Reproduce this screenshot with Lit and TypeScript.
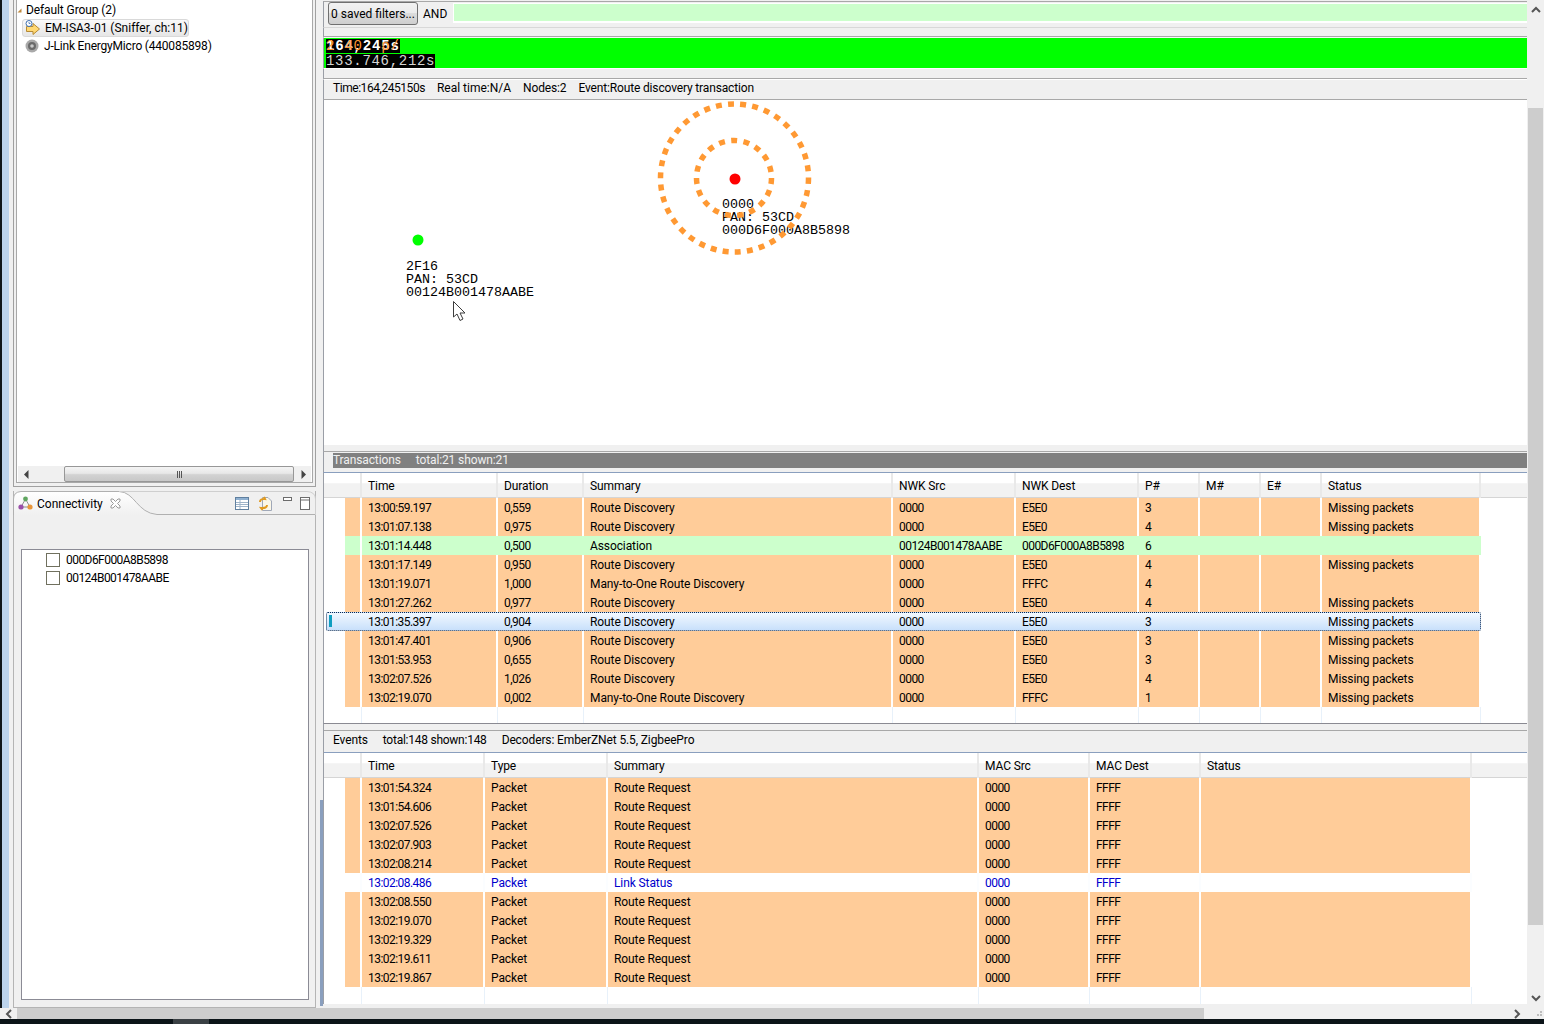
import { LitElement, html, css, svg } from 'lit';
import { customElement, property } from 'lit/decorators.js';

type Tone = 'orange' | 'green' | 'selected' | 'plain';
interface Row {
  tone: Tone;
  cells: string[];
}

const orange = (...cells: string[]): Row => ({ tone: 'orange', cells });

const txColumns = [136, 86, 309, 123, 123, 61, 61, 61, 159];
const txHeads = ['Time', 'Duration', 'Summary', 'NWK Src', 'NWK Dest', 'P#', 'M#', 'E#', 'Status'];
const RD = 'Route Discovery';
const MP = 'Missing packets';
const txRows: Row[] = [
  orange('13:00:59.197', '0,559', RD, '0000', 'E5E0', '3', '', '', MP),
  orange('13:01:07.138', '0,975', RD, '0000', 'E5E0', '4', '', '', MP),
  { tone: 'green', cells: ['13:01:14.448', '0,500', 'Association', '00124B001478AABE', '000D6F000A8B5898', '6', '', '', ''] },
  orange('13:01:17.149', '0,950', RD, '0000', 'E5E0', '4', '', '', MP),
  orange('13:01:19.071', '1,000', 'Many-to-One Route Discovery', '0000', 'FFFC', '4', '', '', ''),
  orange('13:01:27.262', '0,977', RD, '0000', 'E5E0', '4', '', '', MP),
  { tone: 'selected', cells: ['13:01:35.397', '0,904', RD, '0000', 'E5E0', '3', '', '', MP] },
  orange('13:01:47.401', '0,906', RD, '0000', 'E5E0', '3', '', '', MP),
  orange('13:01:53.953', '0,655', RD, '0000', 'E5E0', '3', '', '', MP),
  orange('13:02:07.526', '1,026', RD, '0000', 'E5E0', '4', '', '', MP),
  orange('13:02:19.070', '0,002', 'Many-to-One Route Discovery', '0000', 'FFFC', '1', '', '', MP),
];

const evColumns = [123, 123, 371, 111, 111, 271];
const evHeads = ['Time', 'Type', 'Summary', 'MAC Src', 'MAC Dest', 'Status'];
const rr = (time: string) => orange(time, 'Packet', 'Route Request', '0000', 'FFFF', '');
const evRows: Row[] = [
  rr('13:01:54.324'),
  rr('13:01:54.606'),
  rr('13:02:07.526'),
  rr('13:02:07.903'),
  rr('13:02:08.214'),
  { tone: 'plain', cells: ['13:02:08.486', 'Packet', 'Link Status', '0000', 'FFFF', ''] },
  rr('13:02:08.550'),
  rr('13:02:19.070'),
  rr('13:02:19.329'),
  rr('13:02:19.611'),
  rr('13:02:19.867'),
];

// hex ids and times sit tighter than Roboto's digits
const isNumeric = (text: string) => /^[0-9A-F:.,]+$/.test(text);

@customElement('data-table')
class DataTable extends LitElement {
  @property({ type: Array }) columns: number[] = [];
  @property({ type: Array }) heads: string[] = [];
  @property({ type: Array }) rows: Row[] = [];
  @property({ type: Number }) filler = 16;

  static styles = css`
    :host {
      display: block;
      background: #fff;
      font: 12px Roboto, sans-serif;
      color: #000;
    }
    .head {
      display: grid;
      height: 24px;
      border-bottom: 1px solid #d5d5d5;
      background: linear-gradient(#fff 0, #fff 40%, #f2f2f2 45%, #f2f2f2 100%);
    }
    .head div {
      line-height: 27px;
      padding-left: 6px;
      border-right: 2px solid #e9e9e9;
      box-sizing: border-box;
      white-space: nowrap;
      letter-spacing: -0.1px;
    }
    .head div:last-child {
      border-right: 0;
    }
    .row {
      display: grid;
      height: 19px;
      width: max-content;
      position: relative;
    }
    .cell {
      line-height: 21px;
      padding-left: 6px;
      box-sizing: border-box;
      border-right: 2px solid #fff;
      white-space: nowrap;
      overflow: hidden;
      position: relative;
      letter-spacing: -0.1px;
    }
    .cell.num {
      letter-spacing: -0.55px;
    }
    .lead {
      border: 0;
      padding: 0;
    }
    .orange .cell {
      background: #ffcc99;
    }
    .green .cell {
      background: #ccffcc;
      border-right-color: transparent;
    }
    .green .mark {
      border-right-color: #fff;
    }
    .orange .lead,
    .green .lead {
      background: none;
    }
    .plain .cell {
      color: #0000cc;
      border-right-color: #fbfdff;
    }
    .selected .cell {
      border-right-color: transparent;
    }
    .selected::before {
      content: '';
      position: absolute;
      left: 2px;
      right: 0;
      top: 0;
      bottom: 0;
      border: 1px dotted #0a2a55;
      border-radius: 2px;
      background: linear-gradient(#f2f8ff, #c8e0fb);
    }
    .selected::after {
      content: '';
      position: absolute;
      left: 5px;
      top: 3px;
      width: 3px;
      height: 12px;
      background: #0f9ec0;
    }
    .filler {
      display: grid;
      width: max-content;
    }
    .filler div {
      box-sizing: border-box;
      border-right: 1px solid #e8f1fa;
    }
    .filler .lead {
      border: 0;
    }
  `;

  render() {
    const tracks = [21, 17, ...this.columns].map((w) => `${w}px`).join(' ');
    return html`
      <div class="head" style="grid-template-columns:38px ${this.columns.map((w) => `${w}px`).join(' ')} 1fr">
        <div></div>
        ${this.heads.map((h) => html`<div>${h}</div>`)}
        <div></div>
      </div>
      ${this.rows.map(
        (row) => html`
          <div class="row ${row.tone}" style="grid-template-columns:${tracks}">
            <div class="cell lead"></div>
            <div class="cell mark"></div>
            ${row.cells.map((c) => html`<div class="cell ${isNumeric(c) ? 'num' : ''}">${c}</div>`)}
          </div>
        `,
      )}
      <div class="filler" style="grid-template-columns:${tracks};height:${this.filler}px">
        <div class="lead"></div>
        <div></div>
        ${this.columns.map(() => html`<div></div>`)}
      </div>
    `;
  }
}

const nodes = [
  { x: 94, y: 140, fill: '#00ff00', lines: ['2F16', 'PAN: 53CD', '00124B001478AABE'], lx: 82, ly: 160 },
  { x: 410.5, y: 78.5, fill: '#ff0000', lines: ['0000', 'PAN: 53CD', '000D6F000A8B5898'], lx: 398, ly: 98 },
];

@customElement('app-root')
export class AppRoot extends LitElement {
  static styles = css`
    :host {
      display: flex;
      flex-direction: column;
      width: 1544px;
      height: 1024px;
      overflow: hidden;
      background: #f0f0f0;
      font: 12px Roboto, sans-serif;
      color: #000;
    }
    svg {
      display: block;
      flex: none;
    }
    .main {
      display: flex;
      height: 1008px;
      flex: none;
    }
    .edge {
      width: 7px;
      border-left: 2px solid #10161a;
      background: #bcd3ec;
      flex: none;
    }
    .left {
      width: 303px;
      margin-left: 4px;
      display: flex;
      flex-direction: column;
      flex: none;
    }
    .tree-frame {
      height: 487px;
      box-sizing: border-box;
      border: 1px solid #a0a0a0;
      border-top: 0;
      padding: 0 2px 3px;
      display: flex;
    }
    .tree-inner {
      flex: 1;
      border: 1px solid #a8a8a8;
      border-top: 0;
      background: #fff;
      display: flex;
      flex-direction: column;
    }
    .tree {
      flex: 1;
      padding-top: 1px;
    }
    .tree-row {
      height: 18px;
      line-height: 18px;
      display: flex;
      align-items: center;
      white-space: nowrap;
    }
    .tree-row.group {
      padding-left: 0;
      gap: 4px;
      letter-spacing: -0.1px;
    }
    .tree-row.sel {
      margin-left: 5px;
      width: 167px;
      padding-left: 2px;
      gap: 4px;
      box-sizing: border-box;
      border: 1px solid #d9d9d9;
      border-radius: 3px;
      background: linear-gradient(#fafafa, #e6e6e6);
    }
    .tree-row.dev {
      padding-left: 8px;
      gap: 5px;
      letter-spacing: -0.2px;
    }
    .hbar {
      height: 16px;
      display: flex;
      align-items: center;
      background: #f0f0f0;
      margin: 0 1px;
    }
    .hbar .arr {
      width: 16px;
      display: flex;
      justify-content: center;
      flex: none;
    }
    .hbar .track {
      flex: 1;
      padding-left: 30px;
      height: 16px;
    }
    .hthumb {
      height: 14px;
      width: 228px;
      border: 1px solid #979797;
      border-radius: 2px;
      background: linear-gradient(#f4f4f4, #e8e8e8 45%, #d2d2d2 55%, #c8c8c8);
      display: flex;
      justify-content: center;
      align-items: center;
      gap: 1px;
    }
    .hthumb i {
      width: 1px;
      height: 7px;
      background: #555;
    }
    .conn {
      margin-top: 4px;
      flex: 1;
      margin-bottom: 0;
      box-sizing: border-box;
      border: 1px solid #b4b4b4;
      border-top: 0;
      display: flex;
      flex-direction: column;
      position: relative;
    }
    .conn-head {
      height: 24px;
      flex: none;
      display: flex;
      align-items: center;
      position: relative;
      padding-left: 4px;
    }
    .tab-shape {
      position: absolute;
      left: -1px;
      top: 0;
    }
    .conn-head > *:not(.tab-shape) {
      position: relative;
    }
    .conn-title {
      margin-left: 4px;
      margin-right: 7px;
      padding-top: 2px;
    }
    .conn-tools {
      margin-left: auto;
      margin-right: 5px;
      display: flex;
      gap: 9px;
      align-items: center;
    }
    .tool-min {
      margin-left: 2px;
    }
    .tool-max {
      margin-left: -1px;
    }
    .listbox {
      margin: 34px 6px 7px 7px;
      flex: 1;
      border: 1px solid #8b8b95;
      background: #fff;
      padding-top: 1px;
    }
    .list-row {
      height: 18px;
      display: flex;
      align-items: center;
      padding-left: 24px;
      gap: 6px;
      letter-spacing: -0.55px;
    }
    .check {
      width: 12px;
      height: 12px;
      border: 1px solid #70705e;
      background: #fff;
    }
    .sash {
      width: 4px;
      flex: none;
    }
    .right {
      width: 1208px;
      flex: none;
      box-sizing: border-box;
      padding-left: 3px;
      padding-right: 1px;
      height: 1008px;
      background: linear-gradient(#f0f0f0 0, #f0f0f0 800px, #8a9fbe 800px, #8a9fbe 1006px, #f0f0f0 1006px) no-repeat
        0 0 / 3px 100%;
      display: flex;
      flex-direction: column;
    }
    .right > * {
      flex: none;
      border-left: 1px solid #9a9ea6;
      background: #f0f0f0;
    }
    .right > data-table {
      background: #fff;
    }
    .filters {
      height: 27px;
      box-sizing: border-box;
      margin-top: 1px;
      border-top: 1px solid #a8a8a8;
      border-bottom: 1px solid #d8d8d8;
      display: flex;
      align-items: flex-start;
      padding-left: 4px;
    }
    .saved {
      width: 90px;
      height: 23px;
      box-sizing: border-box;
      border: 1px solid #707070;
      border-radius: 3px;
      background: linear-gradient(#f2f2f2, #ebebeb 50%, #dcdcdc 50%, #cfcfcf);
      text-align: center;
      line-height: 22px;
    }
    .and {
      margin-left: 5px;
      width: 30px;
      line-height: 24px;
    }
    .filter-input {
      flex: 1;
      height: 17px;
      margin-top: 1px;
      border: 1px solid #fff;
      border-width: 1px 0 2px 1px;
      background: #ccffcc;
    }
    .gap-line {
      height: 8px;
      border-bottom: 1px solid #a8a8a8;
    }
    .timeline {
      border-top: 1px solid #f8f8f8;
      border-bottom: 1px solid #fff;
      background: #00ff00;
      height: 30px;
      padding-left: 2px;
      display: flex;
      flex-direction: column;
      align-items: flex-start;
      font: 14px/14px 'Liberation Mono', monospace;
      letter-spacing: 0.7px;
      gap: 1px;
    }
    .timeline > div {
      background: #000;
      height: 14px;
      margin-top: 1px;
      display: grid;
      white-space: pre;
    }
    .timeline > div + div {
      margin-top: 0;
      color: #d6d6d6;
    }
    .now span {
      grid-area: 1 / 1;
      color: #fff;
      font-weight: bold;
      letter-spacing: 0.8px;
    }
    .now span + span {
      color: #ff9933;
      font-weight: normal;
    }
    .gap-two {
      height: 9px;
      border-bottom: 1px solid #a8a8a8;
    }
    .stats {
      height: 19px;
      border-top: 1px solid #fff;
      border-bottom: 1px solid #a8a8a8;
      display: flex;
      padding-left: 9px;
      line-height: 16px;
      white-space: pre;
    }
    .stats span {
      margin-right: 12px;
    }
    .stats .t {
      letter-spacing: -0.45px;
    }
    .stats .n {
      letter-spacing: -0.15px;
    }
    .canvas {
      height: 345px;
      background: #fff;
      position: relative;
      overflow: hidden;
    }
    .rings {
      position: absolute;
      left: 0;
      top: 0;
    }
    .dot {
      position: absolute;
      width: 11px;
      height: 11px;
      border-radius: 50%;
      transform: translate(-5.5px, -5.5px);
    }
    .label {
      position: absolute;
      font: 13.33px/13px 'Liberation Mono', monospace;
      white-space: pre;
    }
    .cursor {
      position: absolute;
      left: 128px;
      top: 200px;
    }
    .sash-h {
      height: 6px;
      border-bottom: 1px solid #a8a8a8;
    }
    .band {
      height: 21px;
      padding-left: 9px;
      padding-top: 1px;
      box-sizing: border-box;
      border-bottom: 1px solid #8a9fbe;
    }
    .band div {
      height: 15px;
      background: #808080;
      color: #f0f0f0;
      line-height: 14px;
      display: flex;
      gap: 15px;
      letter-spacing: -0.12px;
    }
    .band-ev {
      height: 29px;
      border-top: 1px solid #8a8a92;
      display: flex;
      flex-direction: column;
    }
    .band-ev .s {
      height: 6px;
      border-bottom: 1px solid #a8a8a8;
    }
    .band-ev .t {
      flex: 1;
      padding-left: 9px;
      line-height: 19px;
      display: flex;
      gap: 15px;
      letter-spacing: -0.12px;
      border-bottom: 1px solid #8a9fbe;
    }
    .band-ev .total {
      letter-spacing: -0.25px;
    }
    .vbar {
      width: 16px;
      flex: none;
      position: relative;
      display: flex;
      flex-direction: column;
      align-items: center;
    }
    .vbar .up {
      margin-top: 6px;
    }
    .vbar .thumb {
      margin-top: 95px;
      height: 817px;
      width: 15px;
      margin-right: 1px;
      background: #cdcdcd;
    }
    .vbar .down {
      margin-top: 70px;
    }
    .bottom {
      height: 11px;
      flex: none;
      display: flex;
      align-items: center;
      background: #f0f0f0;
    }
    .bottom .thumb {
      margin-left: 5px;
      width: 1187px;
      height: 11px;
      background: #cdcdcd;
    }
    .bottom .l {
      margin-left: 5px;
    }
    .bottom .r {
      margin-left: 310px;
    }
    .grip {
      margin-left: 15px;
    }
    .task {
      height: 5px;
      flex: none;
      background: #0b1418;
      padding-left: 173px;
    }
    .task div {
      width: 36px;
      height: 5px;
      background: #3a4044;
    }
  `;

  private chevron(up: boolean) {
    return html`<svg width="10" height="7" viewBox="0 0 10 7">
      <path d=${up ? 'M1 6 L5 2 L9 6' : 'M1 1 L5 5 L9 1'} fill="none" stroke="#555" stroke-width="2" />
    </svg>`;
  }

  private chevronSide(left: boolean) {
    return html`<svg width="7" height="10" viewBox="0 0 7 10">
      <path d=${left ? 'M6 1 L2 5 L6 9' : 'M1 1 L5 5 L1 9'} fill="none" stroke="#555" stroke-width="2" />
    </svg>`;
  }

  private leftTree() {
    return html`
      <div class="tree">
        <div class="tree-row group">
          <svg width="5" height="5" viewBox="0 0 5 5"><path d="M0.5 4.5 L4.5 0.5 V4.5 Z" fill="#c08a3e" /></svg>
          <span>Default Group (2)</span>
        </div>
        <div class="tree-row sel">
          <svg width="16" height="16" viewBox="0 0 16 16">
            <path d="M1.5 6.5 H8 V3.5 L14.5 9 L8 14.5 V11.5 H1.5 Z" fill="#ffd873" stroke="#b58a36" />
            <circle cx="4" cy="3.5" r="3" fill="#fff" stroke="#3c6fb0" />
            <path d="M4 2 V3.5 H5.5" fill="none" stroke="#3c6fb0" stroke-width="0.8" />
          </svg>
          <span>EM-ISA3-01 (Sniffer, ch:11)</span>
        </div>
        <div class="tree-row dev">
          <svg width="14" height="14" viewBox="0 0 14 14">
            <circle cx="7" cy="7" r="6.5" fill="#a9a9a9" />
            <circle cx="7" cy="7" r="4" fill="#6a6a6a" />
            <circle cx="7" cy="7" r="1.8" fill="#c9c9c9" />
          </svg>
          <span>J-Link EnergyMicro (440085898)</span>
        </div>
      </div>
      <div class="hbar">
        <div class="arr">
          <svg width="5" height="9" viewBox="0 0 5 9"><path d="M4.5 0 V9 L0 4.5 Z" fill="#444" /></svg>
        </div>
        <div class="track">
          <div class="hthumb"><i></i><i></i><i></i></div>
        </div>
        <div class="arr">
          <svg width="5" height="9" viewBox="0 0 5 9"><path d="M0.5 0 V9 L5 4.5 Z" fill="#444" /></svg>
        </div>
      </div>
    `;
  }

  private connectivity() {
    return html`
      <div class="conn">
        <div class="conn-head">
          <svg class="tab-shape" width="303" height="24" viewBox="0 0 303 24">
            <defs>
              <linearGradient id="tabfill" x1="0" y1="0" x2="0" y2="1">
                <stop offset="0" stop-color="#ffffff" />
                <stop offset="1" stop-color="#f0f0f0" />
              </linearGradient>
            </defs>
            <path d="M0.5 24 V8 Q0.5 1 8 0.5 H106 C122 1 124 22 144 23 H303 V24 Z" fill="url(#tabfill)" />
            <path d="M0.5 24 V8 Q0.5 1 8 0.5 H106 C122 1 124 22 144 23.5 H303" fill="none" stroke="#b0b0b0" />
            <path d="M106 0.5 H294 Q302.5 1 302.5 8 V24" fill="none" stroke="#cfcfcf" />
          </svg>
          <svg width="15" height="15" viewBox="0 0 15 15">
            <path d="M7.5 3 L3 11 H12 Z" fill="none" stroke="#8c8c8c" />
            <circle cx="7.5" cy="3" r="2.4" fill="#5fa55f" />
            <circle cx="3" cy="11" r="2.6" fill="#9a4fa8" />
            <circle cx="12" cy="11" r="2.6" fill="#e8963a" />
          </svg>
          <span class="conn-title">Connectivity</span>
          <svg width="11" height="11" viewBox="0 0 11 11">
            <path d="M1 1 L3 1 L5.5 3.5 L8 1 L10 1 L10 3 L7.5 5.5 L10 8 L10 10 L8 10 L5.5 7.5 L3 10 L1 10 L1 8 L3.5 5.5 L1 3 Z" fill="#fff" stroke="#9a9a9a" />
          </svg>
          <div class="conn-tools">
            <svg width="14" height="13" viewBox="0 0 14 13">
              <rect x="0.5" y="0.5" width="13" height="12" fill="#fff" stroke="#5f7f9f" />
              <rect x="1" y="1" width="12" height="2" fill="#8fb0d0" />
              <path d="M1 5.5 H13 M1 7.5 H13 M1 9.5 H13 M5 3 V12" stroke="#9fb4c9" />
            </svg>
            <svg width="14" height="15" viewBox="0 0 14 15">
              <path d="M4.5 1.5 H10 L13.5 5 V14.5 H4.5 Z" fill="#fbf7e8" stroke="#a0a8b8" />
              <path d="M2 6 Q2 2.5 7 3 L6 1 M9 9 Q9 12.5 3 12 L4.5 14" fill="none" stroke="#e09a20" stroke-width="2" />
            </svg>
            <svg class="tool-min" width="9" height="13" viewBox="0 0 9 13">
              <rect x="0.5" y="0.5" width="8" height="3" fill="#fff" stroke="#6c6c6c" />
            </svg>
            <svg class="tool-max" width="10" height="13" viewBox="0 0 10 13">
              <rect x="0.5" y="0.5" width="9" height="12" fill="#fff" stroke="#6c6c6c" />
              <path d="M0.5 3 H9.5" stroke="#6c6c6c" />
            </svg>
          </div>
        </div>
        <div class="listbox">
          <div class="list-row"><div class="check"></div><span>000D6F000A8B5898</span></div>
          <div class="list-row"><div class="check"></div><span>00124B001478AABE</span></div>
        </div>
      </div>
    `;
  }

  private rings() {
    return svg`
      <circle cx="410.5" cy="78" r="74" fill="none" stroke="#ff9933" stroke-width="5.5" stroke-dasharray="6 6.2" />
      <circle cx="410" cy="78" r="37.5" fill="none" stroke="#ff9933" stroke-width="5.5" stroke-dasharray="6 6.4" />
    `;
  }

  render() {
    return html`
      <div class="main">
        <div class="edge"></div>
        <div class="left">
          <div class="tree-frame"><div class="tree-inner">${this.leftTree()}</div></div>
          ${this.connectivity()}
        </div>
        <div class="sash"></div>
        <div class="right">
          <div class="filters">
            <div class="saved">0 saved filters...</div>
            <div class="and">AND</div>
            <div class="filter-input"></div>
          </div>
          <div class="gap-line"></div>
          <div class="timeline">
            <div class="now"><span>164,245s</span><span>2 40  p/</span></div>
            <div>133.746,212s</div>
          </div>
          <div class="gap-two"></div>
          <div class="stats">
            <span class="t">Time:164,245150s</span><span>Real time:N/A</span><span class="n">Nodes:2</span><span class="n">Event:Route discovery transaction</span>
          </div>
          <div class="canvas">
            ${nodes.map(
              (n) => html`
                <div class="label" style="left:${n.lx}px;top:${n.ly}px">${n.lines.join('\n')}</div>
                <div class="dot" style="left:${n.x}px;top:${n.y}px;background:${n.fill}"></div>
              `,
            )}
            <svg class="rings" width="600" height="200">${this.rings()}</svg>
            <svg class="cursor" width="16" height="22" viewBox="0 0 16 22">
              <path d="M1.5 1.5 V17 L5 14 L8 20.5 L11 19 L8 13 H13 Z" fill="#fff" stroke="#3c3c3c" />
            </svg>
          </div>
          <div class="sash-h"></div>
          <div class="band"><div><span>Transactions</span><span>total:21 shown:21</span></div></div>
          <data-table .columns=${txColumns} .heads=${txHeads} .rows=${txRows} .filler=${16}></data-table>
          <div class="band-ev">
            <div class="s"></div>
            <div class="t"><span>Events</span><span class="total">total:148 shown:148</span><span>Decoders: EmberZNet 5.5, ZigbeePro</span></div>
          </div>
          <data-table .columns=${evColumns} .heads=${evHeads} .rows=${evRows} .filler=${17}></data-table>
        </div>
        <div class="vbar">
          <div class="up">${this.chevron(true)}</div>
          <div class="thumb"></div>
          <div class="down">${this.chevron(false)}</div>
        </div>
      </div>
      <div class="bottom">
        <div class="l">${this.chevronSide(true)}</div>
        <div class="thumb"></div>
        <div class="r">${this.chevronSide(false)}</div>
        <svg class="grip" width="6" height="8" viewBox="0 0 6 8">
          <path d="M4 1 h2 v2 h-2 z M1 4 h2 v2 h-2 z M4 4 h2 v2 h-2 z" fill="#bdbdbd" />
        </svg>
      </div>
      <div class="task"><div></div></div>
    `;
  }
}
